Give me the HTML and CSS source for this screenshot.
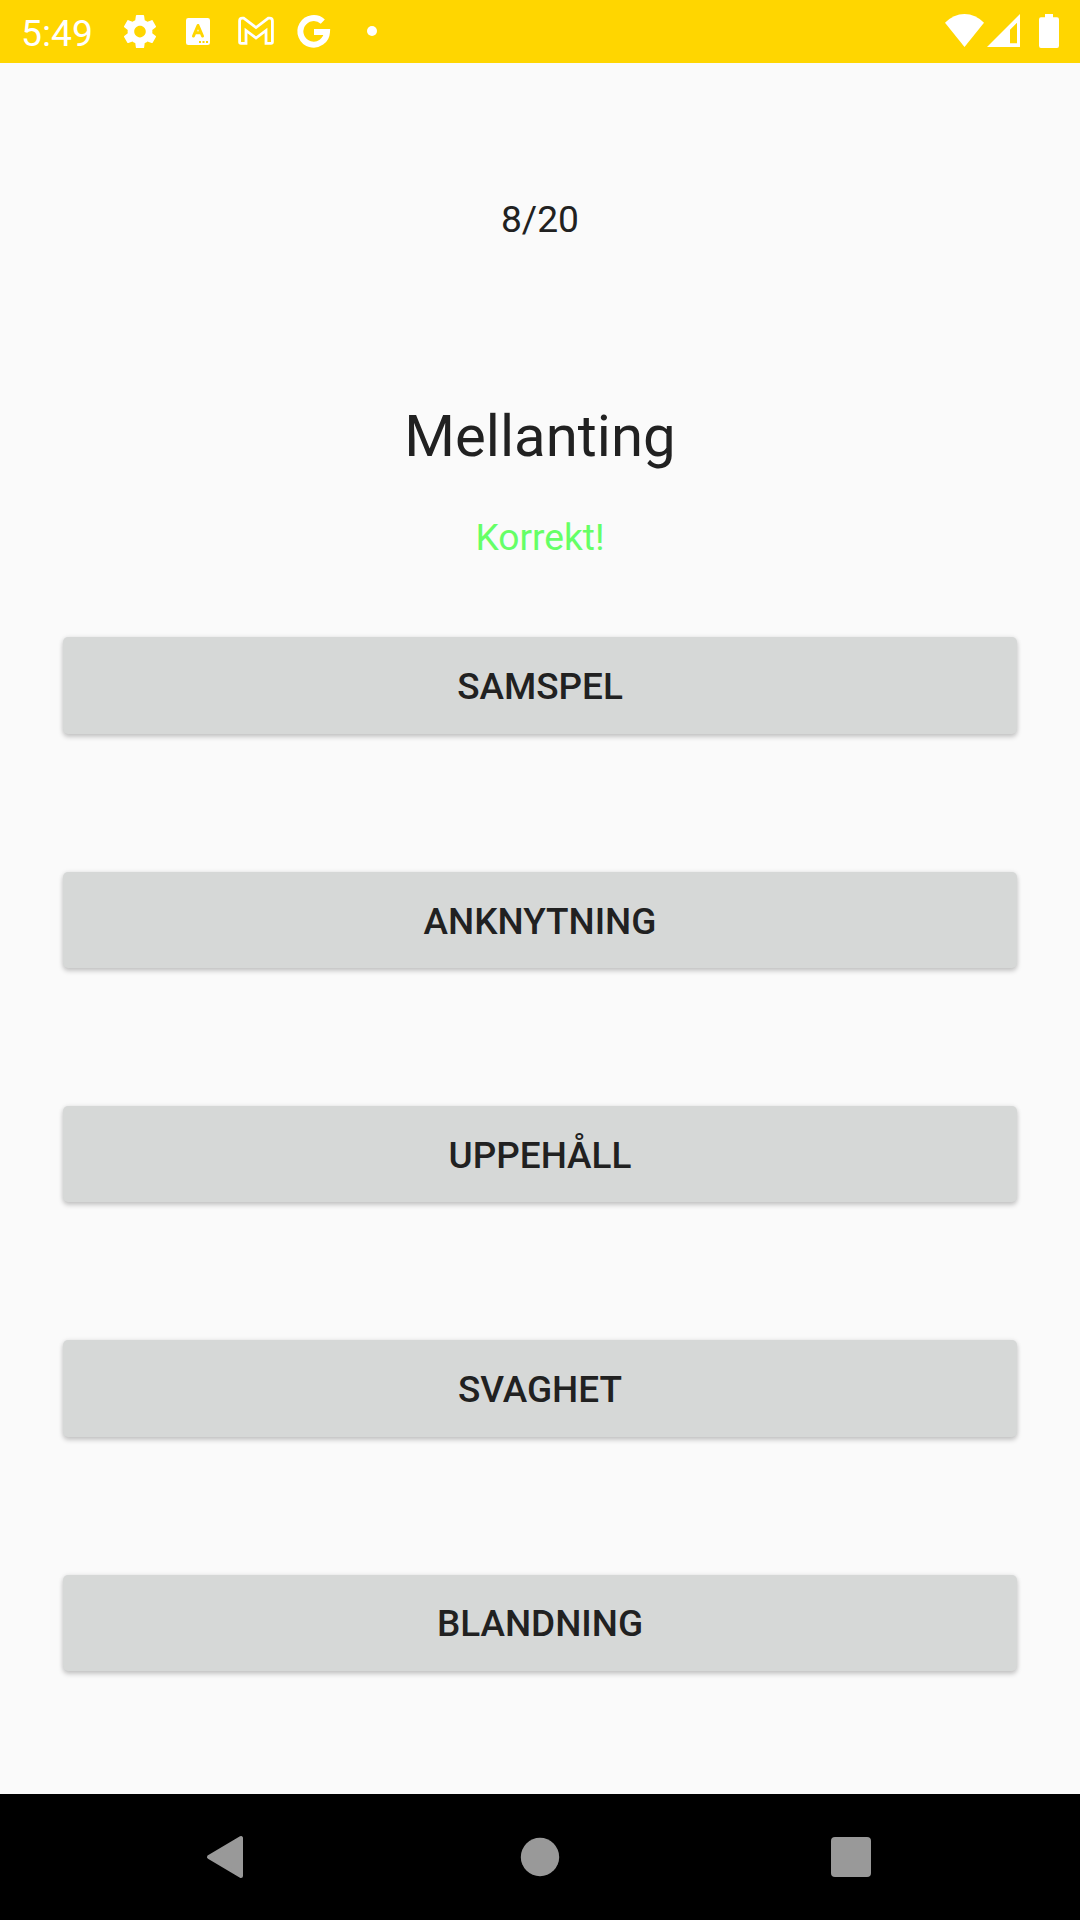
FILE: index.html
```html
<!DOCTYPE html>
<html lang="sv">
<head>
<meta charset="utf-8">
<title>Mellanting</title>
<link rel="stylesheet" href="styles.css">
</head>
<body>
<header class="status">
  <span class="clock">5:49</span>
  <div class="notifications">
    <svg class="note" viewBox="111 0 58 63"><path fill-rule="evenodd" transform="translate(120.2 11.8) scale(1.65)" d="M19.43 12.98c.04-.32.07-.64.07-.98s-.03-.66-.07-.98l2.11-1.65c.19-.15.24-.42.12-.64l-2-3.46c-.12-.22-.39-.3-.61-.22l-2.49 1c-.52-.4-1.08-.73-1.69-.98l-.38-2.65C14.46 2.18 14.25 2 14 2h-4c-.25 0-.46.18-.49.42l-.38 2.65c-.61.25-1.17.59-1.69.98l-2.49-1c-.23-.09-.49 0-.61.22l-2 3.46c-.13.22-.07.49.12.64l2.11 1.65c-.04.32-.07.65-.07.98s.03.66.07.98l-2.11 1.65c-.19.15-.24.42-.12.64l2 3.46c.12.22.39.3.61.22l2.49-1c.52.4 1.08.73 1.69.98l.38 2.65c.03.24.24.42.49.42h4c.25 0 .46-.18.49-.42l.38-2.65c.61-.25 1.17-.59 1.69-.98l2.49 1c.23.09.49 0 .61-.22l2-3.46c.12-.22.07-.49-.12-.64l-2.11-1.65zM12 15.5c-1.93 0-3.5-1.57-3.5-3.5s1.57-3.5 3.5-3.5 3.5 1.57 3.5 3.5-1.57 3.5-3.5 3.5z"/></svg>
    <svg class="note" viewBox="169 0 58 63"><rect x="186" y="18" width="24" height="27" rx="2.3"/><path class="cut-line" d="M193.500 36 198 25.500 202.500 36M195.300 32.700H200.700"/><path class="cut" d="M199 41h2v2h-2zM202.500 41h2v2h-2zM206 41h2v2h-2z"/></svg>
    <svg class="note" viewBox="227 0 58 63"><path class="outline" d="M239.600 42V21Q239.600 18.200 242.400 18.200H243.700L256 27.600 268.300 18.200H269.600Q272.400 18.200 272.400 21V42Q272.400 43.400 271 43.400H266V30.500L256 38 246 30.500V43.400H241Q239.600 43.400 239.600 42Z"/></svg>
    <svg class="note" viewBox="285 0 58 63"><path class="g-mark" d="M322.800 21.600A13.300 13.300 0 1 0 327 32H314"/></svg>
    <svg class="note" viewBox="343 0 58 63"><circle cx="372" cy="31" r="5"/></svg>
  </div>
  <svg class="system" viewBox="940 0 140 63">
    <path d="M945 22.800Q953.500 14 964.500 14T984 22.800L964.500 47Z"/>
    <path fill-rule="evenodd" d="M987 47 1020 14V47ZM1010 29.700V43.300H1017V22.700Z"/>
    <path d="M1045 17.300V14H1053V17.300H1057Q1059 17.300 1059 19.500V45.800Q1059 48 1057 48H1041Q1039 48 1039 45.800V19.500Q1039 17.300 1041 17.300Z"/>
  </svg>
</header>
<main class="quiz">
  <p class="progress">8/20</p>
  <h1 class="word">Mellanting</h1>
  <p class="result">Korrekt!</p>
  <div class="answers">
    <button class="answer">SAMSPEL</button>
    <button class="answer">ANKNYTNING</button>
    <button class="answer">UPPEHÅLL</button>
    <button class="answer">SVAGHET</button>
    <button class="answer">BLANDNING</button>
  </div>
</main>
<nav class="navbar">
  <svg class="nav-icon" viewBox="-30 -30 60 60"><path class="back" d="M-16 0 16 -19V19Z"/></svg>
  <svg class="nav-icon" viewBox="-30 -30 60 60"><circle r="19.200"/></svg>
  <svg class="nav-icon" viewBox="-30 -30 60 60"><rect x="-20" y="-20" width="40" height="40" rx="4"/></svg>
</nav>
</body>
</html>
```
FILE: styles.css
```css
* { box-sizing: border-box; }
body {
  margin: 0;
  width: 1080px;
  height: 1920px;
  display: flex;
  flex-direction: column;
  background: #fafafa;
  color: #212121;
  font-family: Roboto, sans-serif;
}
.status {
  height: 63px;
  display: flex;
  background: #ffd600;
  color: #fff;
  fill: #fff;
}
.clock {
  width: 111px;
  padding-left: 21px;
  font-size: 37.3px;
  line-height: 66px;
}
.notifications { display: flex; flex: 1; }
.note { width: 58px; height: 63px; }
.system { width: 140px; height: 63px; }
.cut { fill: #ffd600; }
.cut-line { fill: none; stroke: #ffd600; stroke-width: 3; stroke-linejoin: round; stroke-linecap: round; }
.outline { fill: none; stroke: #fff; stroke-width: 2.8; }
.g-mark { fill: none; stroke: #fff; stroke-width: 6; }
.quiz {
  flex: 1;
  display: flex;
  flex-direction: column;
  padding: 131px 63px 0;
  text-align: center;
}
.progress, .result { margin: 0; font-size: 37.2px; line-height: 50px; }
.word { margin: 150px 0 0; font-size: 58.1px; font-weight: 400; line-height: 84px; }
.result { margin-top: 34px; color: #66ff66; }
.answers { display: flex; flex-direction: column; gap: 138px; margin-top: 75.4px; }
.answer {
  height: 96.3px;
  padding: 2.500px 0 0;
  border: 0;
  border-radius: 5px;
  background: #d6d8d7;
  color: #212121;
  font: 500 36.9px Roboto, sans-serif;
  box-shadow: 0 3px 5px rgba(0, 0, 0, .2), 0 0 5px rgba(0, 0, 0, .08);
}
.navbar {
  height: 126px;
  display: flex;
  justify-content: space-between;
  align-items: center;
  padding: 0 199px 0 195px;
  background: #000;
  fill: #999;
}
.nav-icon { width: 60px; height: 60px; }
.nav-icon:nth-child(2) { margin-left: 4px; }
.back { stroke: #999; stroke-width: 4; stroke-linejoin: round; }
```
